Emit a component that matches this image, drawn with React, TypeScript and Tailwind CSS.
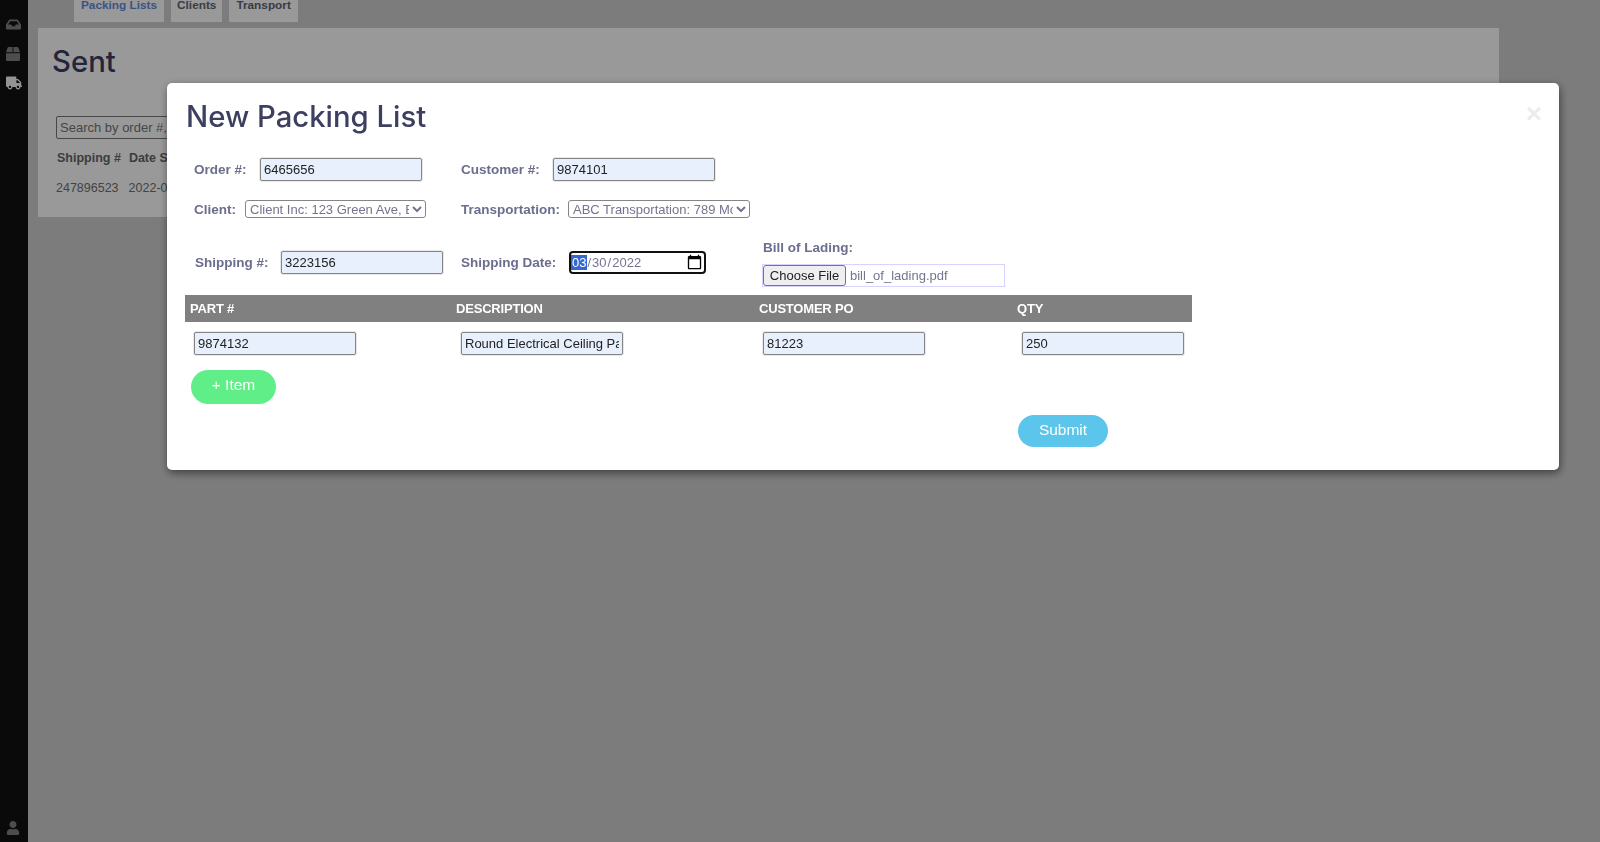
import React, { useEffect, useRef } from 'react'
import { FaBox, FaInbox, FaTruck, FaUser } from 'react-icons/fa'

const textInput =
  'h-[23px] w-[162px] rounded-[2px] border border-[#858585] bg-[#e8f0fe] px-[3px] text-[13px] text-[#222] shadow-[0_0_0_1px_#e8e8e8]'
const selectInput =
  'h-[18px] rounded-[3px] border border-[#858585] bg-white text-[13px] text-[#74748f]'
const label = 'text-[13.5px] leading-[16px] font-bold text-[#6b6e8c]'

const columns = [
  { header: 'PART #', value: '9874132' },
  { header: 'DESCRIPTION', value: 'Round Electrical Ceiling Panel' },
  { header: 'CUSTOMER PO', value: '81223' },
  { header: 'QTY', value: '250' },
]

function Background() {
  return (
    <div className="flex h-screen overflow-hidden bg-[#cfcfcf]">
      <aside className="flex w-[28px] shrink-0 flex-col items-center bg-[#111] pr-[2px] text-[#808080]">
        <FaInbox className="mt-[17px]" size={15} />
        <FaBox className="mt-[15px]" size={14} />
        <FaTruck className="mt-[14px] ml-[1px] text-[#f5f5f5]" size={16} />
        <FaUser className="mt-auto mb-[7px]" size={14} />
      </aside>
      <main className="flex-1 pl-[10px]">
        <nav className="ml-[36px] flex h-[22px] gap-[7px] text-[11.8px] font-bold text-[#646474]">
          <a className="flex items-end bg-white px-[7px] pb-[7px] text-[#5f8cdc]">Packing Lists</a>
          <a className="flex items-end bg-white px-[6px] pb-[7px]">Clients</a>
          <a className="flex items-end bg-white px-[7px] pb-[7px]">Transport</a>
        </nav>
        <section className="mt-[6px] h-[189px] w-[1461px] bg-white pr-[14px] pl-[18px]">
          <h1 className="-ml-[4px] pt-[16px] font-['Inter',sans-serif] text-[29.3px] leading-[36px] font-[550] text-[#3d3f66]">Sent</h1>
          <input
            className="mt-[36px] block h-[23px] w-[320px] rounded-[2px] border border-[#777] px-[3px] text-[13px] placeholder:text-[#757575]"
            placeholder="Search by order #, client"
          />
          <div className="mt-[10px] flex gap-[8px] text-[12.5px] font-bold text-[#666]">
            <span className="pl-[1px]">Shipping #</span>
            <span>Date Sent</span>
          </div>
          <div className="mt-[11px] flex gap-[10px] text-[12.5px] text-[#707070]">
            <span>247896523</span>
            <span>2022-03-30</span>
          </div>
        </section>
      </main>
    </div>
  )
}

export default function App() {
  const fileRef = useRef<HTMLInputElement>(null)

  // a file input only shows a name once it holds a file
  useEffect(() => {
    const dt = new DataTransfer()
    dt.items.add(new File(['x'], 'bill_of_lading.pdf', { type: 'application/pdf' }))
    if (fileRef.current) fileRef.current.files = dt.files
  }, [])

  return (
    <div className="font-['Liberation_Sans',Arial,sans-serif]">
      <Background />

      {/* New packing list modal */}
      <div className="fixed inset-0 bg-black/40">
        <div className="relative mt-[83px] ml-[167px] h-[387px] w-[1392px] rounded-[5px] bg-white shadow-[1px_3px_9px_rgba(0,0,0,0.5)]">
          <button className="absolute top-[15px] right-[17px] text-[28px] leading-[32px] font-bold text-[#ececec]">×</button>

          <h2 className="pt-[16px] pl-[19px] font-['Inter',sans-serif] text-[29.3px] leading-[36px] font-[550] text-[#3c3f5f]">
            New Packing List
          </h2>

          <div className="mt-[23px] flex items-center pl-[27px]">
            <label className={`${label} w-[66px]`}>Order #:</label>
            <input className={textInput} defaultValue="6465656" />
            <label className={`${label} ml-[39px] w-[92px]`}>Customer #:</label>
            <input className={textInput} defaultValue="9874101" />
          </div>

          <div className="mt-[19px] flex items-center pl-[27px]">
            <label className={`${label} w-[51px] pt-[1px]`}>Client:</label>
            <select className={`${selectInput} w-[181px]`}>
              <option>Client Inc: 123 Green Ave, Eastville, NY</option>
            </select>
            <label className={`${label} ml-[35px] w-[107px] pt-[1px]`}>Transportation:</label>
            <select className={`${selectInput} w-[182px]`}>
              <option>ABC Transportation: 789 Moore St, Albany, NY</option>
            </select>
          </div>

          <div className="mt-[22px] flex h-[47px] items-center pl-[28px]">
            <label className={`${label} mb-[2px] w-[86px]`}>Shipping #:</label>
            <input className={`${textInput} mb-[2px]`} defaultValue="3223156" />
            <label className={`${label} mb-[2px] ml-[18px] w-[108px]`}>Shipping Date:</label>
            <input
              autoFocus
              type="date"
              defaultValue="2022-03-30"
              className="mb-[2px] h-[23px] w-[137px] rounded-[2px] border border-[#767676] pr-[2px] pl-[1px] text-[13px] text-[#74748f] [&::-webkit-calendar-picker-indicator]:m-0 [&::-webkit-calendar-picker-indicator]:h-[17px] [&::-webkit-calendar-picker-indicator]:w-[17px] [&::-webkit-calendar-picker-indicator]:p-0 [&::-webkit-datetime-edit-month-field:focus]:bg-[#0a6cd6]! [&::-webkit-datetime-edit-month-field:focus]:text-white!"
            />
            <div className="ml-[56px] flex flex-col">
              <label className={`${label} mb-[8px] pl-[1px]`}>Bill of Lading:</label>
              <input
                ref={fileRef}
                type="file"
                className="h-[23px] w-[243px] border border-[#d4d4ff] text-[13px] text-[#74748f] file:mr-[4px] file:h-[21px] file:w-[83px] file:rounded-[3px] file:border file:border-[#767676] file:bg-[#efefef] file:text-[#222]"
              />
            </div>
          </div>

          <div className="mt-[8px] ml-[18px] w-[1007px]">
            <div className="grid h-[27px] grid-cols-[266px_303px_258px_180px] items-center bg-[#808080] text-[13px] leading-[16px] font-bold tracking-[-0.2px] text-white">
              {columns.map((col) => (
                <span key={col.header} className="pl-[5px]">{col.header}</span>
              ))}
            </div>
            <div className="grid grid-cols-[266px_303px_258px_180px] pt-[9px]">
              {columns.map((col, i) => (
                <div key={col.header} className={i % 2 ? 'pl-[10px]' : 'pl-[9px]'}>
                  <input className={textInput} defaultValue={col.value} />
                </div>
              ))}
            </div>
          </div>

          <button className="mt-[15px] ml-[24px] block h-[34px] w-[85px] rounded-full bg-[#5fee88] pb-[4px] text-[15.5px] text-white">
            + Item
          </button>
          <button className="mt-[11px] ml-[851px] block h-[32px] w-[90px] rounded-full bg-[#5bc5ec] pb-[3px] text-[15.5px] text-white">
            Submit
          </button>
        </div>
      </div>
    </div>
  )
}
